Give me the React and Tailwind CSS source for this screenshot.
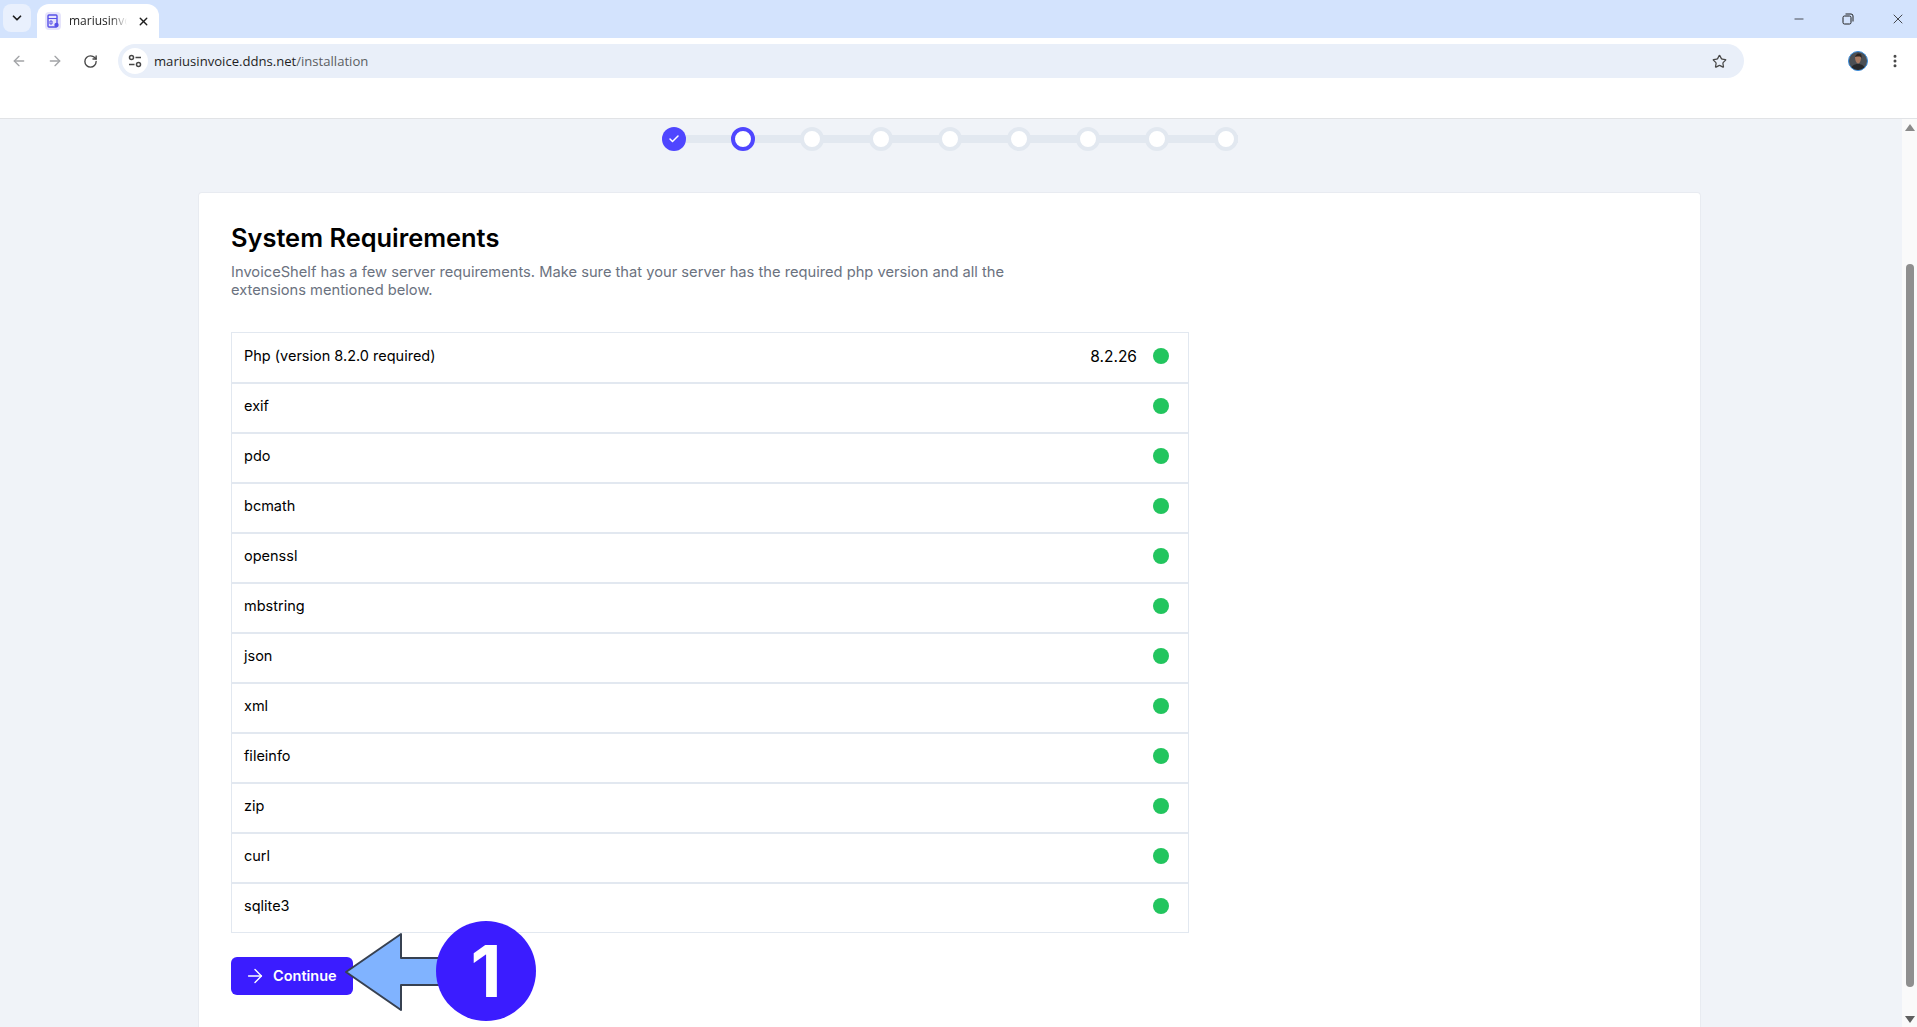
import { ArrowLeft, ArrowRight, ChevronDown, RotateCw, Star, X, Minus, Check, MoreVertical } from "lucide-react";

const requirements = ["exif", "pdo", "bcmath", "openssl", "mbstring", "json", "xml", "fileinfo", "zip", "curl", "sqlite3"];
const steps = [1, 2, 3, 4, 5, 6, 7];

function BrowserChrome() {
  return (
    <div className="shrink-0 font-['Open_Sans',sans-serif]">
      <div className="flex h-[38px] bg-[#d3e3fd]">
        <div className="ml-[3px] mt-1 flex h-7 w-[28px] items-center justify-center rounded-lg bg-[#e9f0fd]">
          <ChevronDown size={14} strokeWidth={3} className="text-[#1f1f1f]" />
        </div>
        <div className="ml-[6px] mt-1 flex h-[34px] w-[122px] items-center rounded-t-xl bg-white pl-2">
          <div className="flex h-[18px] w-4 items-center justify-center rounded-sm bg-[#e6e4fb]">
            <svg width="12" height="14" viewBox="0 0 12 14" fill="none">
              <rect x="1" y="1" width="9" height="12" rx="1" stroke="#5851e8" strokeWidth="1.4" />
              <path d="M1 4.5h9M3 7h2v3H3z" stroke="#5851e8" />
              <circle cx="9.5" cy="11" r="2.2" fill="#5851e8" />
            </svg>
          </div>
          <span className="ml-2 w-[58px] whitespace-nowrap bg-gradient-to-r from-[#1f1f1f] from-70% to-white bg-clip-text text-xs text-transparent">mariusinvo</span>
          <X size={13} strokeWidth={2.5} className="ml-[10px] text-[#1f1f1f]" />
        </div>
        <div className="ml-auto flex items-center gap-[36px] pr-[11px] text-[#1f1f1f]">
          <Minus size={14} strokeWidth={1.3} />
          <svg width="12" height="12" viewBox="0 0 12 12" fill="none" stroke="currentColor" strokeWidth="1">
            <rect x="1" y="3" width="8" height="8" rx="1.5" />
            <path d="M3.5 1h5.5a2 2 0 0 1 2 2v5.5" />
          </svg>
          <X size={16} strokeWidth={1.2} />
        </div>
      </div>
      <div className="h-[81px] border-b border-[#e1e3e6] bg-white">
        <div className="flex h-[46px] items-center">
          <ArrowLeft size={16} className="ml-[11px] text-[#a2a4a7]" />
          <ArrowRight size={16} className="ml-[20px] text-[#a2a4a7]" />
          <RotateCw size={15} strokeWidth={2.2} className="ml-[20px] text-[#474747]" />
          <div className="ml-[20px] flex h-[34px] w-[1626px] items-center rounded-full bg-[#e9eff9] pl-1">
            <div className="flex h-[26px] w-[26px] items-center justify-center rounded-full bg-white">
              <svg width="14" height="14" viewBox="0 0 14 14" fill="none" stroke="#474747" strokeWidth="1.5">
                <circle cx="3.5" cy="3.5" r="2" />
                <path d="M7.5 3.5H13M1 10.5h5.5" />
                <circle cx="10.5" cy="10.5" r="2" />
              </svg>
            </div>
            <span className="ml-[6px] mt-px text-[13.1px] text-[#1f1f1f]">
              mariusinvoice.ddns.net<span className="text-[#5b5e62]">/installation</span>
            </span>
            <Star size={15} strokeWidth={2} className="ml-auto mr-[17px] text-[#474747]" />
          </div>
          <div className="ml-[104px] flex h-5 w-5 items-center justify-center overflow-hidden rounded-full border border-[#3b8ede] bg-[#4b4f54]">
            <svg width="18" height="18" viewBox="0 0 18 18">
              <path d="M2 18c0-4 3-6 7-6s7 2 7 6z" fill="#26282b" />
              <path d="M6 5c0-2 1.500-3 3.500-3S12.500 3.500 12 6.500 11 11 9 11.500C7 11 6 8 6 5z" fill="#a87a62" />
              <path d="M6 5c0-2 2-3.500 4-3.500S13 3 12.500 6L11 4.500 8 4.500z" fill="#2c2420" />
            </svg>
          </div>
          <MoreVertical size={16} strokeWidth={2.5} className="ml-[19px] text-[#474747]" />
        </div>
      </div>
    </div>
  );
}

function Stepper() {
  return (
    <div className="relative flex h-6 w-[576px] items-center justify-between">
      <div className="absolute inset-x-0 top-2 h-2 bg-[#e2e8f0]" />
      <div className="relative flex h-6 w-6 items-center justify-center rounded-full bg-[#4f46ff]">
        <Check size={12} strokeWidth={3} className="text-white" />
      </div>
      <div className="relative h-6 w-6 rounded-full border-4 border-[#4f46ff] bg-white" />
      {steps.map((s) => (
        <div key={s} className="relative h-6 w-6 rounded-full border-4 border-[#e2e8f0] bg-white" />
      ))}
    </div>
  );
}

function Row({ label, version }) {
  return (
    <div className="flex h-[50px] items-center border border-b-0 border-[#e2e8f0] pb-1 pl-3 pr-[19px] text-black [&:not(:first-child)]:border-t-2">
      <span className="text-[14.5px]">{label}</span>
      {version && <span className="ml-auto mr-4 mt-[2px] text-[15.500px]">{version}</span>}
      <span className={`h-4 w-4 rounded-full bg-[#22c55e] ${version ? "" : "ml-auto"}`} />
    </div>
  );
}

export default function App() {
  return (
    <div className="flex h-[1027px] w-[1917px] flex-col overflow-hidden bg-[#f0f3f8]">
      <BrowserChrome />
      <div className="flex min-h-0 flex-1">
        <main className="flex min-w-0 flex-1 flex-col items-center overflow-hidden pr-[3px] font-['Inter',sans-serif]">
          <div className="mt-[8px]">
            <Stepper />
          </div>
          <section className="mt-[41px] w-[1503px] flex-1 rounded-t border border-b-0 border-[#e8ebf1] bg-white px-8 pt-[29px]">
            <h1 className="text-[25.4px] font-semibold leading-8 text-black">System Requirements</h1>
            <p className="mt-[9px] w-[840px] text-[14.7px] leading-[18px] text-[#6b7280]">
              InvoiceShelf has a few server requirements. Make sure that your server has the required php version and all the extensions mentioned below.
            </p>
            <div className="mt-[33px] w-[958px] border-b border-[#e2e8f0]">
              <Row label="Php (version 8.2.0 required)" version="8.2.26" />
              {requirements.map((r) => (
                <Row key={r} label={r} />
              ))}
            </div>
            <div className="relative mt-[24px] h-[38px] w-[122px]">
              <button className="flex h-[38px] w-[122px] items-center rounded-md bg-[#3b1cff] pl-[13px] text-[14.5px] font-semibold text-white">
                <ArrowRight size={22} strokeWidth={1.5} className="mr-[7px]" />
                Continue
              </button>
              <svg className="absolute left-[113px] top-[-26px]" width="112" height="84" viewBox="0 0 112 84">
                <path d="M2 41 L57 3 V27 H110 V54 H57 V79 Z" fill="#80b3ff" stroke="#374151" strokeWidth="2" strokeLinejoin="round" />
              </svg>
              <div className="absolute left-[205px] top-[-36px] flex h-[100px] w-[100px] items-center justify-center rounded-full bg-[#3b1cff] text-[72px] font-bold text-white">
                1
              </div>
            </div>
          </section>
        </main>
        <div className="flex w-[15px] flex-col items-center justify-between bg-[#fafafa]">
          <div className="flex w-full flex-1 flex-col">
            <div className="mx-auto mt-[5px] h-0 w-0 border-x-[5px] border-b-[7px] border-x-transparent border-b-[#8a8a8a]" />
            <div className="mx-auto mt-[133px] h-[723px] w-[8px] rounded-full bg-[#8f8f8f]" />
          </div>
          <div className="mb-[4px] h-0 w-0 border-x-[5px] border-t-[7px] border-x-transparent border-t-[#5f5f5f]" />
        </div>
      </div>
    </div>
  );
}
